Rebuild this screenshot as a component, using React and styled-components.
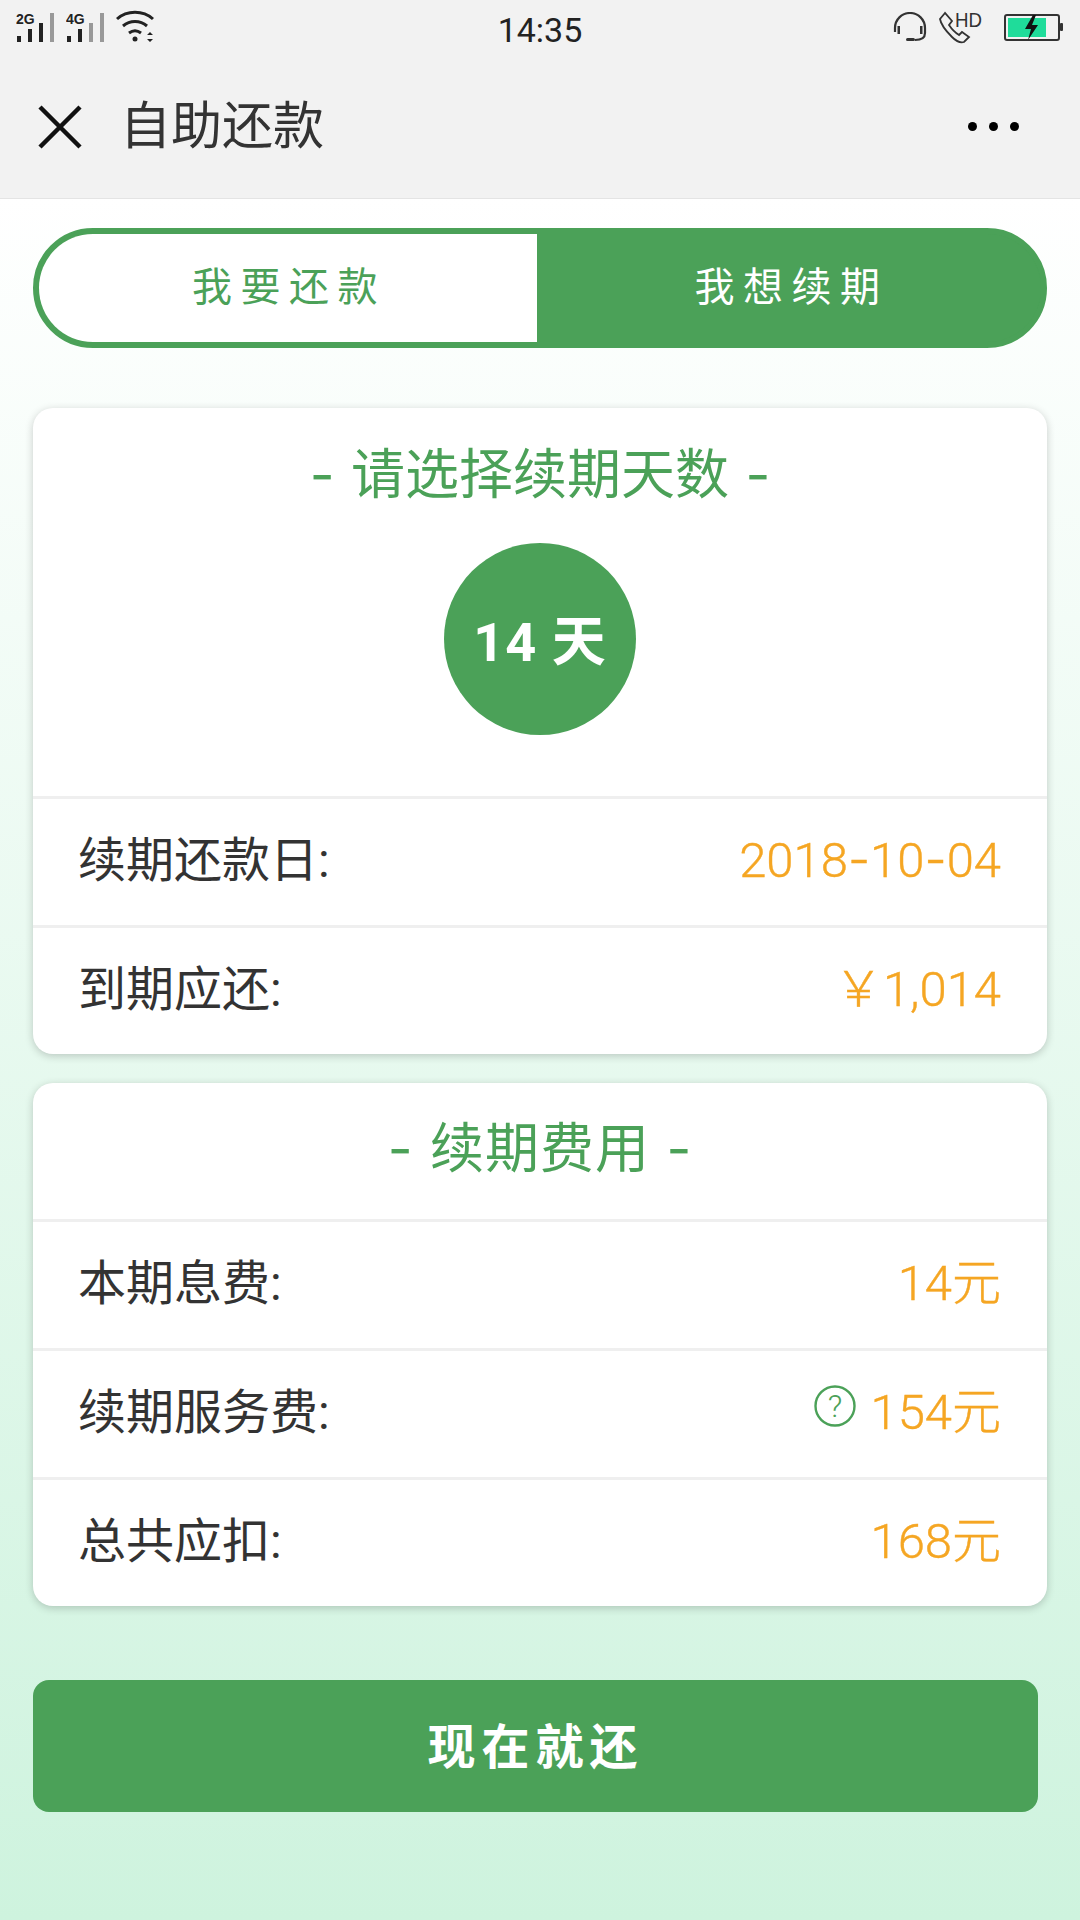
import React from "react";
import styled, { createGlobalStyle } from "styled-components";

const GREEN = "#4ba158";
const ORANGE = "#f5a623";
const FONT = `"Roboto", "Noto Sans CJK SC", sans-serif`;

const Global = createGlobalStyle`
  html, body { margin: 0; padding: 0; }
  body { font-family: ${FONT}; background: #cff3de; }
  * { box-sizing: border-box; }
`;

const Page = styled.div`
  width: 1080px;
  height: 1920px;
  overflow: hidden;
  display: flex;
  flex-direction: column;
  background: linear-gradient(180deg, #ffffff 198px, #cef3de 100%);
`;

/* top chrome */
const Chrome = styled.div`
  height: 199px;
  flex: none;
  background: #f2f2f2;
  border-bottom: 1px solid #e4e4e4;
  display: flex;
  flex-direction: column;
`;

const StatusBar = styled.div`
  height: 60px;
  padding: 10px 16px 0 16px;
  display: grid;
  grid-template-columns: 1fr auto 1fr;
  align-items: start;
`;

const StatusGroup = styled.div`
  display: flex;
  align-items: flex-start;
  justify-content: ${({ $end }) => ($end ? "flex-end" : "flex-start")};
  gap: ${({ $end }) => ($end ? "12px" : "10px")};
`;

const Clock = styled.div`
  font-size: 34px;
  line-height: 38px;
  color: #222;
  margin-top: 1px;
`;

const NavBar = styled.div`
  flex: 1;
  display: flex;
  align-items: center;
  padding: 0 53px 5px 38px;
`;

const NavTitle = styled.div`
  font-size: 51px;
  color: #333;
  margin-left: 38px;
  flex: 1;
  line-height: 60px;
`;

const Dots = styled.div`
  display: flex;
  gap: 12px;
  margin-right: 8px;
`;

const Dot = styled.span`
  width: 9px;
  height: 9px;
  border-radius: 50%;
  background: #000;
`;

/* body */
const Content = styled.div`
  padding: 29px 33px 0;
  display: flex;
  flex-direction: column;
`;

const Tabs = styled.div`
  height: 120px;
  display: flex;
  border: 6px solid ${GREEN};
  border-radius: 60px;
  overflow: hidden;
  background: ${GREEN};
`;

const Tab = styled.div`
  width: 498px;
  flex: ${({ $active }) => ($active ? 1 : "none")};
  background: ${({ $active }) => ($active ? GREEN : "#fff")};
  color: ${({ $active }) => ($active ? "#fff" : GREEN)};
  font-size: 40px;
  letter-spacing: 8.5px;
  display: flex;
  align-items: center;
  justify-content: center;
  padding-bottom: 9px;
  padding-left: ${({ $active }) => ($active ? "5px" : "2px")};
`;

const Card = styled.div`
  background: #fff;
  border-radius: 20px;
  box-shadow: 0 2px 8px rgba(0, 0, 0, 0.2);
  margin-top: ${({ $top }) => $top}px;
  display: flex;
  flex-direction: column;
  overflow: hidden;
`;

const CardTitle = styled.div`
  height: ${({ $height }) => $height}px;
  flex: none;
  color: ${GREEN};
  font-size: 54px;
  line-height: 64px;
  text-align: center;
  padding-top: ${({ $pad }) => $pad}px;
  letter-spacing: ${({ $spacing }) => $spacing || 0}px;
`;

/* the source's hyphens are wider and sit higher than Roboto's */
const Dash = styled.span`
  font-family: "Inter", sans-serif;
  margin: 0 ${({ $gap }) => $gap || 0}px;
`;

const Picker = styled.div`
  height: 253px;
  display: flex;
  justify-content: center;
`;

const Days = styled.div`
  width: 192px;
  height: 192px;
  border-radius: 50%;
  background: ${GREEN};
  color: #fff;
  font-size: 54px;
  font-weight: 700;
  letter-spacing: 1px;
  display: flex;
  align-items: center;
  justify-content: center;
  padding-bottom: 3px;
`;

const Row = styled.div`
  height: 129px;
  border-top: 3px solid #efefef;
  padding: 0 46px 12px;
  display: flex;
  align-items: center;
  justify-content: space-between;
`;

const Label = styled.div`
  font-size: 48px;
  color: #333;
  margin-left: -1px;
`;

const Value = styled.div`
  font-size: 49px;
  line-height: 60px;
  margin-top: 9px;
  font-weight: 300;
  color: ${ORANGE};
  -webkit-text-stroke: 0.4px ${ORANGE};
  display: flex;
  align-items: center;
  gap: 14px;
`;

const PayButton = styled.div`
  width: 1005px;
  height: 132px;
  margin-top: 74px;
  border-radius: 16px;
  background: ${GREEN};
  color: #fff;
  font-size: 48px;
  font-weight: 700;
  letter-spacing: 6px;
  display: flex;
  align-items: center;
  justify-content: center;
  padding-bottom: 6px;
`;

const Signal = ({ label, lit }) => (
  <svg width="40" height="34" viewBox="0 0 40 34">
    <text x="0" y="14" fontSize="14" fontWeight="700" fontFamily="Liberation Sans, sans-serif" fill="#222">{label}</text>
    {[[1, 26, 6], [12, 19, 13], [23, 13, 19], [34, 3, 29]].map(([x, y, h], i) => (
      <rect key={x} x={x} y={y} width="4" height={h} fill={i < lit ? "#222" : "#999"} />
    ))}
  </svg>
);

const Wifi = () => (
  <svg width="40" height="34" viewBox="0 0 40 34" fill="none" stroke="#222" strokeWidth="3">
    <path d="M1 9C11 0 27 0 37 9" />
    <path d="M7 16C14 10 24 10 31 16" />
    <path d="M13 23C17 20 21 20 25 23" />
    <circle cx="19" cy="29" r="2.5" fill="#222" stroke="none" />
    <path d="M31 25l3-3 3 3zM31 29l3 3 3-3z" fill="#222" stroke="none" />
  </svg>
);

const Headset = () => (
  <svg width="34" height="32" viewBox="0 0 34 32" fill="none" stroke="#333" strokeWidth="2.2" style={{ marginTop: 2 }}>
    <path d="M2 20V16A15 15 0 0 1 32 16V21C32 26 29 28 22 28" />
    <rect x="4.5" y="14" width="2.5" height="8" fill="#333" stroke="none" />
    <rect x="27" y="14" width="2.5" height="8" fill="#333" stroke="none" />
    <rect x="13" y="26" width="9" height="3" rx="1.5" fill="#333" stroke="none" />
  </svg>
);

const HdCall = () => (
  <svg width="44" height="40" viewBox="0 -6 44 40" fill="none" stroke="#333" strokeWidth="1.8" style={{ marginTop: -4 }}>
    <path d="M6 1L1 7C2 13 9 21 13 25C17 29 22 31 25 30L30 25L23 20L20 23C15 20 12 16 10 13L13 9Z" />
    <text x="16" y="15" fontSize="20" textLength="27" lengthAdjust="spacingAndGlyphs" fontFamily="Liberation Sans, sans-serif" fill="#333" stroke="none">HD</text>
  </svg>
);

const Battery = () => (
  <svg width="60" height="28" viewBox="0 0 60 28" style={{ marginTop: 4, marginLeft: 9 }}>
    <rect x="1" y="1" width="54" height="25" rx="2" fill="none" stroke="#333" strokeWidth="2" />
    <rect x="4" y="4" width="38" height="19" fill="#1fdc9a" />
    <rect x="56" y="9" width="3" height="8" rx="1" fill="#333" />
    <path d="M29 1L21 15H27L24 26L34 11H28L32 1Z" fill="#111" />
  </svg>
);

const CloseIcon = () => (
  <svg width="44" height="44" viewBox="0 0 44 44" stroke="#111" strokeWidth="4.5" fill="none">
    <path d="M2 2L42 42M42 2L2 42" />
  </svg>
);

const HelpIcon = () => (
  <svg width="42" height="42" viewBox="0 0 42 42" style={{ marginTop: -14 }}>
    <circle cx="21" cy="21" r="19.5" fill="none" stroke={GREEN} strokeWidth="2.4" />
    <text x="21" y="32" textAnchor="middle" fontSize="32" fontFamily="Roboto, sans-serif" fill={GREEN} stroke="none">?</text>
  </svg>
);

export default function App() {
  return (
    <Page>
      <Global />
      <Chrome>
        <StatusBar>
          <StatusGroup>
            <Signal label="2G" lit={3} />
            <Signal label="4G" lit={2} />
            <Wifi />
          </StatusGroup>
          <Clock>14:35</Clock>
          <StatusGroup $end>
            <Headset />
            <HdCall />
            <Battery />
          </StatusGroup>
        </StatusBar>
        <NavBar>
          <CloseIcon />
          <NavTitle>自助还款</NavTitle>
          <Dots>
            <Dot />
            <Dot />
            <Dot />
          </Dots>
        </NavBar>
      </Chrome>

      <Content>
        <Tabs>
          <Tab>我要还款</Tab>
          <Tab $active>我想续期</Tab>
        </Tabs>

        <Card $top={60}>
          <CardTitle $height={135} $pad={35}>
            <Dash $gap={3}>-</Dash> 请选择续期天数 <Dash $gap={3}>-</Dash>
          </CardTitle>
          <Picker>
            <Days>14 天</Days>
          </Picker>
          <Row>
            <Label>续期还款日:</Label>
            <Value>
              <span>2018<Dash>-</Dash>10<Dash>-</Dash>04</span>
            </Value>
          </Row>
          <Row>
            <Label>到期应还:</Label>
            <Value>￥1,014</Value>
          </Row>
        </Card>

        <Card $top={29}>
          <CardTitle $height={136} $pad={34} $spacing={1}>
            <Dash $gap={2}>-</Dash> 续期费用 <Dash $gap={2}>-</Dash>
          </CardTitle>
          <Row>
            <Label>本期息费:</Label>
            <Value>14元</Value>
          </Row>
          <Row>
            <Label>续期服务费:</Label>
            <Value>
              <HelpIcon />
              154元
            </Value>
          </Row>
          <Row>
            <Label>总共应扣:</Label>
            <Value>168元</Value>
          </Row>
        </Card>

        <PayButton>现在就还</PayButton>
      </Content>
    </Page>
  );
}
